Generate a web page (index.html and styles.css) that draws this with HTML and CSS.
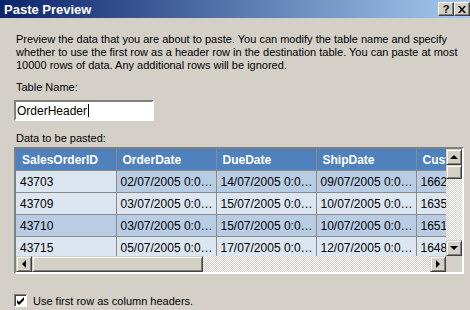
FILE: index.html
```html
<!DOCTYPE html>
<html lang="en">
<head>
    <meta charset="UTF-8">
    <title>Paste Preview</title>
    <link rel="stylesheet" href="styles.css">
</head>
<body>
    <div class="dialog">
        <div class="titlebar">
            <span class="title">Paste Preview</span>
            <div class="tb-buttons">
                <div class="tb-btn help">?</div>
                <div class="tb-btn">
                    <svg width="8" height="7" viewBox="0 0 8 7"><path d="M0 0h2l2 2.5L6 0h2L5 3.5 8 7H6L4 4.5 2 7H0l3-3.5z" fill="#000"/></svg>
                </div>
            </div>
        </div>

        <div class="content">
            <p class="intro">Preview the data that you are about to paste. You can modify the table name and specify whether to use the first row as a header row in the destination table. You can paste at most 10000 rows of data. Any additional rows will be ignored.</p>

            <div class="label">Table Name:</div>
            <div class="textbox">OrderHeader<span class="caret"></span></div>

            <div class="label data-label">Data to be pasted:</div>
            <div class="grid">
                <div class="grid-top">
                    <div class="grid-view">
                        <table>
                            <colgroup>
                                <col><col><col><col><col>
                            </colgroup>
                            <tr class="head">
                                <th>SalesOrderID</th><th>OrderDate</th><th>DueDate</th><th>ShipDate</th><th>Cust</th>
                            </tr>
                            <tr class="odd">
                                <td class="current">43703</td><td>02/07/2005 0:0…</td><td>14/07/2005 0:0…</td><td>09/07/2005 0:0…</td><td>1662</td>
                            </tr>
                            <tr>
                                <td>43709</td><td>03/07/2005 0:0…</td><td>15/07/2005 0:0…</td><td>10/07/2005 0:0…</td><td>1635</td>
                            </tr>
                            <tr class="odd">
                                <td>43710</td><td>03/07/2005 0:0…</td><td>15/07/2005 0:0…</td><td>10/07/2005 0:0…</td><td>1651</td>
                            </tr>
                            <tr>
                                <td>43715</td><td>05/07/2005 0:0…</td><td>17/07/2005 0:0…</td><td>12/07/2005 0:0…</td><td>1648</td>
                            </tr>
                        </table>
                    </div>
                    <div class="vscroll">
                        <div class="sb-btn"><span class="arrow up"></span></div>
                        <div class="sb-thumb v"></div>
                        <div class="sb-track"></div>
                        <div class="sb-btn"><span class="arrow down"></span></div>
                    </div>
                </div>
                <div class="hscroll-row">
                    <div class="hscroll">
                        <div class="sb-btn"><span class="arrow left"></span></div>
                        <div class="sb-thumb h"></div>
                        <div class="sb-track"></div>
                        <div class="sb-btn"><span class="arrow right"></span></div>
                    </div>
                    <div class="corner"></div>
                </div>
            </div>

            <div class="check-row">
                <div class="checkbox">
                    <svg width="9" height="9" viewBox="0 0 9 9"><path d="M1 3l2 2 5-5v3L3 8 1 6z" fill="#000"/></svg>
                </div>
                <span>Use first row as column headers.</span>
            </div>
        </div>
    </div>
</body>
</html>
```

FILE: styles.css
```css
body {
    margin: 0;
    width: 470px;
    height: 310px;
    overflow: hidden;
    background-color: #d4d0c8;
    font-family: "Liberation Sans", Arial, sans-serif;
    font-size: 11px;
    color: #000;
}
.titlebar {
    height: 18px;
    display: flex;
    align-items: center;
    justify-content: space-between;
    background: linear-gradient(to right, #0a246a, #a6caf0);
    padding-left: 4px;
}
.title {
    color: #fff;
    font-weight: bold;
    font-size: 13px;
}
.tb-buttons {
    display: flex;
    align-self: flex-start;
    margin-top: 2px;
}
.tb-btn {
    width: 14px;
    height: 12px;
    display: flex;
    align-items: center;
    justify-content: center;
    background-color: #d4d0c8;
    border: 1px solid;
    border-color: #fff #404040 #404040 #fff;
    box-shadow: inset -1px -1px #808080;
    font-weight: bold;
    font-size: 11px;
}
.content {
    padding-left: 16px;
}
.intro {
    margin: 15px 0 0 0;
    line-height: 13px;
    width: 450px;
}
.label {
    line-height: 13px;
    margin-top: 9px;
}
.textbox {
    margin: 6px 0 0 -2px;
    width: 135px;
    height: 17px;
    background-color: #fff;
    border: 2px solid;
    border-color: #808080 #fff #fff #808080;
    padding-left: 1px;
    font-size: 12px;
    display: flex;
    align-items: center;
}
.caret {
    display: inline-block;
    width: 1px;
    height: 13px;
    background-color: #000;
    margin-left: 1px;
}
.data-label {
    margin-top: 11px;
}
.grid {
    margin: 2px 0 0 -2px;
    width: 446px;
    border: 2px solid;
    border-color: #808080 #fff #fff #808080;
}
.grid-top {
    display: flex;
    height: 107px;
}
.grid-view {
    width: 430px;
    overflow: hidden;
    background-color: #fff;
}
table {
    border-collapse: collapse;
    table-layout: fixed;
    width: 500px;
    font-size: 12px;
}
col {
    width: 100px;
}
th, td {
    height: 21px;
    padding: 0 0 0 4px;
    text-align: left;
    white-space: nowrap;
    overflow: hidden;
    border-right: 1px solid #8a8a8a;
    border-bottom: 1px solid #8a8a8a;
}
th {
    background-color: #4f81bd;
    color: #fff;
    padding-left: 6px;
}
td {
    background-color: #dce6f1;
}
tr.odd td {
    background-color: #b8cce4;
}
tr.odd td.current {
    background-color: #dce6f1;
}
.vscroll {
    width: 16px;
    display: flex;
    flex-direction: column;
}
.hscroll-row {
    display: flex;
    height: 16px;
}
.hscroll {
    width: 430px;
    display: flex;
}
.corner {
    width: 16px;
    background-color: #d4d0c8;
}
.sb-btn, .sb-thumb {
    box-sizing: border-box;
    background-color: #d4d0c8;
    border: 1px solid;
    border-color: #d4d0c8 #404040 #404040 #d4d0c8;
    box-shadow: inset 1px 1px #fff, inset -1px -1px #808080;
    display: flex;
    align-items: center;
    justify-content: center;
}
.sb-btn {
    width: 16px;
    height: 16px;
    flex: none;
}
.sb-thumb.v {
    height: 14px;
}
.sb-thumb.h {
    width: 171px;
}
.sb-track {
    flex: 1;
    background: repeating-conic-gradient(#fff 0 25%, #d4d0c8 0 50%) 0 0 / 2px 2px;
}
.arrow {
    width: 0;
    height: 0;
    border: 4px solid transparent;
}
.arrow.up {
    border-bottom-color: #000;
    border-top-width: 0;
}
.arrow.down {
    border-top-color: #000;
    border-bottom-width: 0;
}
.arrow.left {
    border-right-color: #000;
    border-left-width: 0;
}
.arrow.right {
    border-left-color: #000;
    border-right-width: 0;
}
.check-row {
    margin: 20px 0 0 -2px;
    display: flex;
    align-items: center;
    gap: 6px;
}
.checkbox {
    width: 9px;
    height: 9px;
    padding: 1px;
    background-color: #fff;
    border: 1px solid;
    border-color: #808080 #fff #fff #808080;
    box-shadow: inset 1px 1px #404040;
}
```
